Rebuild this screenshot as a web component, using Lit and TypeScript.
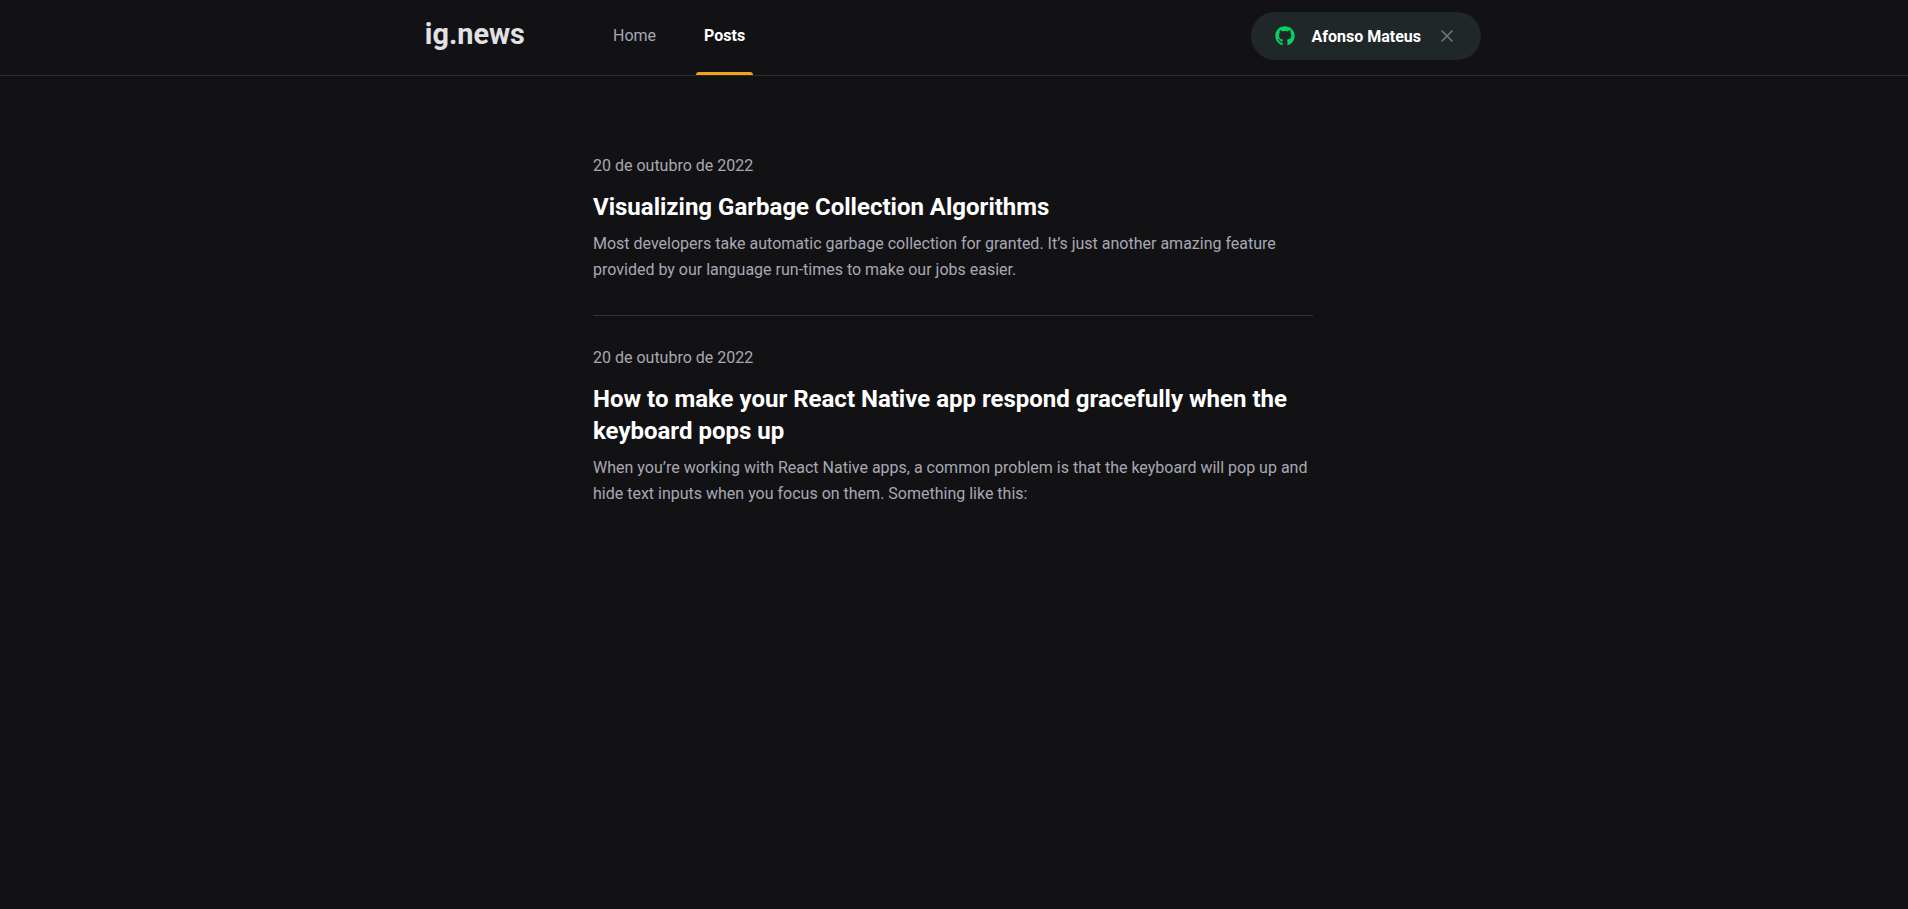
import { LitElement, html, css } from "lit";
import { customElement } from "lit/decorators.js";
import { classMap } from "lit/directives/class-map.js";

interface Post {
  date: string;
  title: string;
  excerpt: string;
}

const POSTS: Post[] = [
  {
    date: "20 de outubro de 2022",
    title: "Visualizing Garbage Collection Algorithms",
    excerpt:
      "Most developers take automatic garbage collection for granted. It’s just another amazing feature provided by our language run-times to make our jobs easier.",
  },
  {
    date: "20 de outubro de 2022",
    title: "How to make your React Native app respond gracefully when the keyboard pops up",
    excerpt:
      "When you’re working with React Native apps, a common problem is that the keyboard will pop up and hide text inputs when you focus on them. Something like this:",
  },
];

@customElement("sign-in-button")
class SignInButton extends LitElement {
  static styles = css`
    :host {
      display: block;
      margin-left: auto;
    }
    .button {
      display: flex;
      align-items: center;
      height: 48px;
      padding: 0 24px;
      border: 0;
      border-radius: 48px;
      background: #202729;
      color: #fff;
      font: 700 16px Roboto, sans-serif;
    }
    .github {
      width: 20px;
      height: 20px;
      margin-right: 16px;
      fill: #04d361;
    }
    .close {
      width: 20px;
      height: 20px;
      margin-left: 16px;
      stroke: #737380;
      stroke-width: 2;
      stroke-linecap: round;
      fill: none;
    }
  `;

  render() {
    return html`
      <button class="button" type="button">
        <svg class="github" viewBox="0 0 496 512">
          <path
            d="M165.9 397.4c0 2-2.3 3.6-5.2 3.6-3.3.3-5.6-1.3-5.6-3.6 0-2 2.3-3.6 5.2-3.6 3-.3 5.6 1.3 5.6 3.6zm-31.1-4.5c-.7 2 1.3 4.3 4.3 4.9 2.6 1 5.6 0 6.2-2s-1.3-4.3-4.3-5.2c-2.600-.7-5.500.3-6.200 2.300zm44.200-1.700c-2.900.7-4.900 2.600-4.600 4.900.3 2 2.900 3.300 5.900 2.600 2.900-.7 4.900-2.600 4.600-4.600-.3-1.900-3-3.200-5.900-2.900zM244.800 8C106.100 8 0 113.300 0 252c0 110.900 69.800 205.800 169.500 239.200 12.800 2.300 17.300-5.600 17.300-12.100 0-6.200-.3-40.400-.3-61.400 0 0-70 15-84.700-29.800 0 0-11.400-29.100-27.800-36.600 0 0-22.900-15.700 1.600-15.400 0 0 24.900 2 38.600 25.800 21.900 38.600 58.600 27.500 72.900 20.900 2.300-16 8.800-27.100 16-33.700-55.900-6.200-112.300-14.300-112.300-110.500 0-27.500 7.600-41.300 23.600-58.900-2.600-6.500-11.100-33.300 2.600-67.900 20.900-6.500 69 27 69 27 20-5.600 41.500-8.500 62.800-8.500s42.800 2.900 62.800 8.500c0 0 48.100-33.600 69-27 13.700 34.700 5.200 61.400 2.600 67.900 16 17.700 25.800 31.500 25.800 58.900 0 96.500-58.900 104.200-114.800 110.500 9.200 7.900 17 22.900 17 46.400 0 33.700-.3 75.400-.3 83.600 0 6.500 4.600 14.400 17.300 12.100C428.200 457.800 496 362.900 496 252 496 113.300 383.500 8 244.800 8z"
          />
        </svg>
        Afonso Mateus
        <svg class="close" viewBox="0 0 24 24">
          <path d="M18 6 6 18M6 6l12 12" />
        </svg>
      </button>
    `;
  }
}

@customElement("site-header")
class SiteHeader extends LitElement {
  static styles = css`
    :host {
      display: block;
      padding-right: 2px;
      border-bottom: 1px solid #29292e;
    }
    .content {
      box-sizing: border-box;
      display: flex;
      align-items: flex-start;
      max-width: 1120px;
      height: 75px;
      margin: 0 auto;
      padding: 0 32px;
    }
    .logo {
      width: 100px;
      height: 40px;
      margin-top: 14px;
      overflow: visible;
      fill: #e1e1e6;
      font: 700 28.8px Roboto, sans-serif;
    }
    .nav {
      display: flex;
      gap: 32px;
      height: 75px;
      margin-left: 80px;
    }
    .link {
      display: grid;
      grid-template-rows: 72px 3px;
      color: #a8a8b3;
      line-height: 72px;
    }
    .active {
      color: #fff;
      font-weight: 700;
    }
    .label {
      padding: 0 8px;
    }
    .active .marker {
      border-radius: 3px 3px 0 0;
      background: #f0a516;
    }
    .account {
      margin-top: 12px;
    }
  `;

  private link(label: string, active: boolean) {
    return html`<a class=${classMap({ link: true, active })}
      ><span class="label">${label}</span><span class="marker"></span
    ></a>`;
  }

  render() {
    return html`
      <div class="content">
        <svg class="logo" viewBox="0 0 100 40"><text x="-0.2" y="30">ig.news</text></svg>
        <nav class="nav">${this.link("Home", false)}${this.link("Posts", true)}</nav>
        <sign-in-button class="account"></sign-in-button>
      </div>
    `;
  }
}

@customElement("app-root")
class AppRoot extends LitElement {
  static styles = css`
    :host {
      display: block;
      min-height: 100vh;
      background: #121214;
      color: #fff;
      font: 400 16px Roboto, sans-serif;
    }
    .page {
      padding: 80px 2px 0 0;
    }
    .posts {
      max-width: 720px;
      margin: 0 auto;
    }
    .post {
      padding-bottom: 32px;
    }
    .post + .post {
      margin-top: 32px;
    }
    .post:not(:last-child) {
      border-bottom: 1px solid #323238;
    }
    .date {
      display: flex;
      align-items: center;
      color: #a8a8b3;
    }
    .title {
      margin: 16px 0 0;
      font-size: 24px;
      font-weight: 700;
      line-height: 32px;
    }
    .excerpt {
      margin: 8px 0 0;
      color: #a8a8b3;
      line-height: 26px;
    }
  `;

  render() {
    return html`
      <site-header></site-header>
      <main class="page">
        <div class="posts">
          ${POSTS.map(
            (post) => html`
              <article class="post">
                <time class="date">${post.date}</time>
                <h2 class="title">${post.title}</h2>
                <p class="excerpt">${post.excerpt}</p>
              </article>
            `
          )}
        </div>
      </main>
    `;
  }
}
